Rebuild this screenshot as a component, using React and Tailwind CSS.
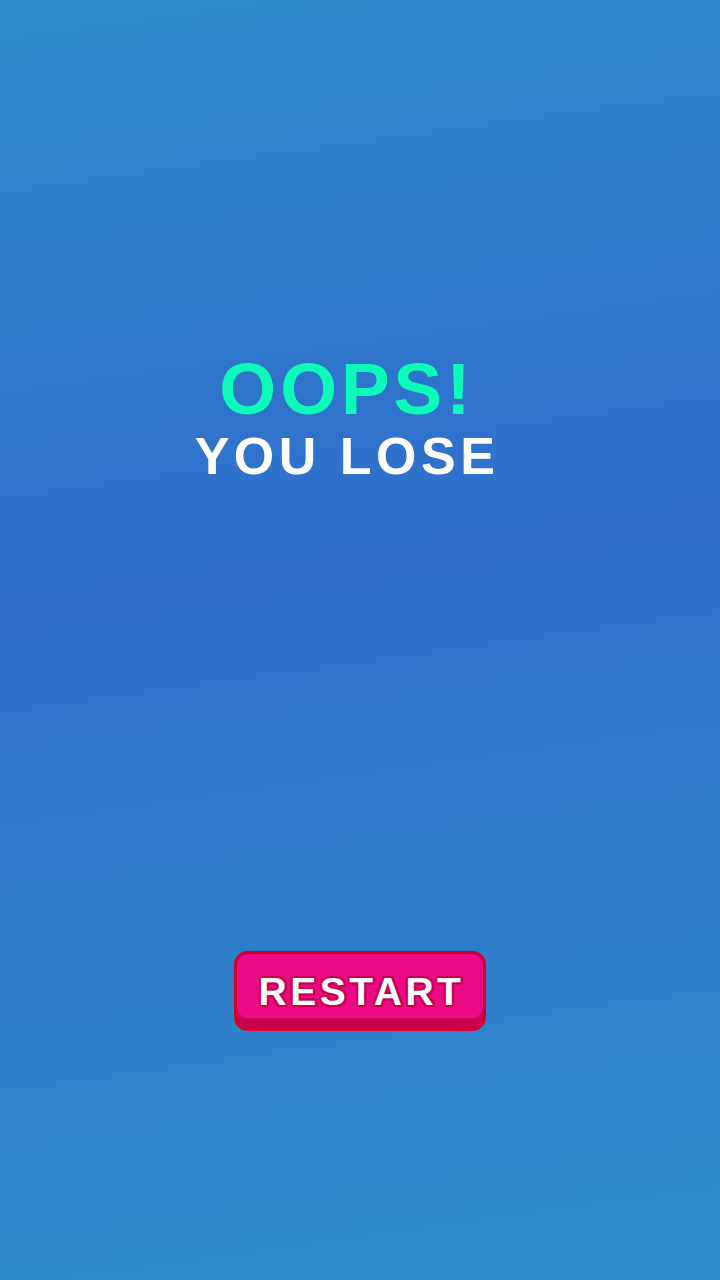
import React from 'react';

export default function App() {
  return (
    <div className="w-[720px] h-[1280px] flex flex-col items-center bg-[linear-gradient(172deg,#2e8ccb_0%,#2f74cb_32%,#2f6fcb_45%,#2f7ccb_70%,#2e8eca_100%)] font-['Liberation_Sans',Arial,sans-serif]">
      {/* title */}
      <div className="mt-[349px] pr-[26px] flex flex-col items-center">
        <h1 className="text-[73px] leading-[80px] font-bold tracking-[4px] text-[#0dfbb9]">OOPS!</h1>
        <h2 className="-mt-[3px] text-[52px] leading-[60px] font-bold tracking-[4.5px] text-white">YOU LOSE</h2>
      </div>

      {/* restart button */}
      <button className="mt-[465px] w-[252px] h-[80px] rounded-[14px] border-[3px] border-[#d3002b] bg-[#c6004f] pb-[10px] cursor-pointer">
        <div className="h-full rounded-[11px] bg-[#ec0a85] flex items-center justify-center pt-[12px] pl-[3px]">
          <span className="text-[39px] font-bold tracking-[3.5px] text-white [text-shadow:0_0_3px_#c8004f,2px_0_0_#c8004f,-2px_0_0_#c8004f,0_2px_0_#c8004f,0_-2px_0_#c8004f,2px_2px_0_#c8004f,-2px_-2px_0_#c8004f,2px_-2px_0_#c8004f,-2px_2px_0_#c8004f]">RESTART</span>
        </div>
      </button>
    </div>
  );
}
